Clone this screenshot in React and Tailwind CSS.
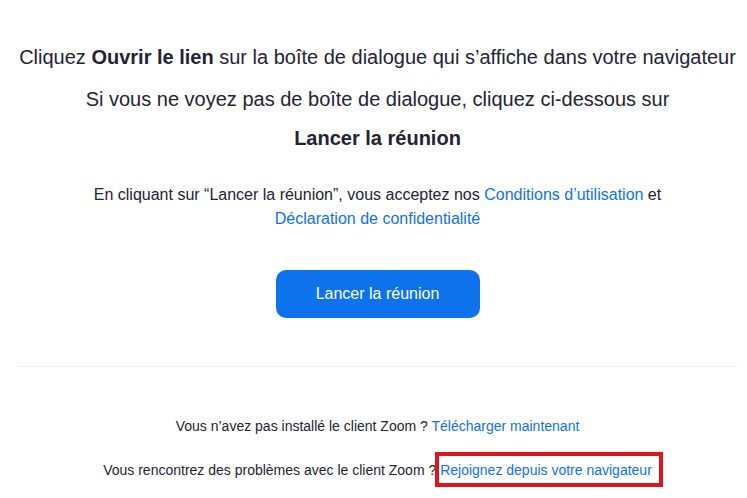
import React from "react";

const App = () => {
    return (
        <div className="min-h-screen bg-white pl-[18px] pr-[10px] text-[#232333]" style={{ fontFamily: '"Liberation Sans", Arial, sans-serif' }}>
            <div className="flex flex-col items-center text-center">
                <p className="mt-[45px] text-[20px] leading-[24px] whitespace-nowrap">
                    Cliquez <strong className="font-bold">Ouvrir le lien</strong> sur la boîte de dialogue qui s’affiche dans votre navigateur
                </p>
                <p className="mt-[18px] text-[20px] leading-[24px]">
                    Si vous ne voyez pas de boîte de dialogue, cliquez ci-dessous sur
                </p>
                <p className="mt-[15px] text-[20px] leading-[24px] font-bold">Lancer la réunion</p>

                <p className="mt-[33px] text-[16px] leading-[24px] max-w-[600px]">
                    En cliquant sur “Lancer la réunion”, vous acceptez nos{" "}
                    <a href="#" className="text-[#0e72ed]">Conditions d’utilisation</a> et{" "}
                    <a href="#" className="text-[#0e72ed]">Déclaration de confidentialité</a>
                </p>

                <button type="button" className="mt-[39px] w-[204px] h-[48px] rounded-[10px] bg-[#0e72ed] text-white text-[16px]">
                    Lancer la réunion
                </button>
            </div>

            <div className="mt-[48px] border-t border-[#ededed]"></div>

            <div className="flex flex-col items-center text-[14px] leading-[20px]">
                <p className="mt-[49px]">
                    Vous n’avez pas installé le client Zoom ?{" "}
                    <a href="#" className="text-[#0e72ed]">Télécharger maintenant</a>
                </p>
                <p className="mt-[24px]">
                    Vous rencontrez des problèmes avec le client Zoom ?{" "}
                    <span className="relative inline-block">
                        <a href="#" className="text-[#0e72ed]">Rejoignez depuis votre navigateur</a>
                        {/* annotation box */}
                        <span className="absolute -left-[5px] -right-[11px] -top-[8px] -bottom-[7px] border-[4px] border-[#e0141b] pointer-events-none"></span>
                    </span>
                </p>
            </div>
        </div>
    );
};

export default App;
